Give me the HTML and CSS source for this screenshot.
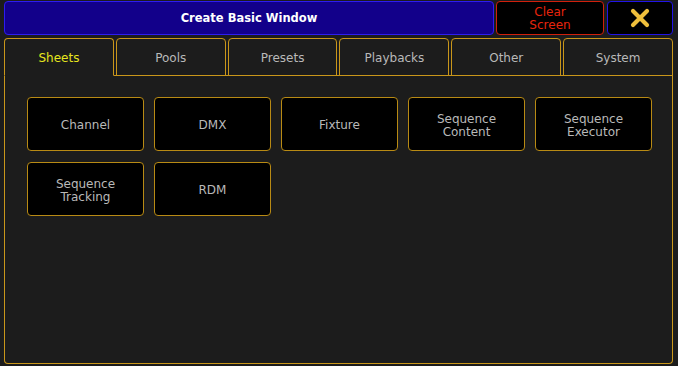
FILE: index.html
```html
<!DOCTYPE html>
<html lang="en">
<head>
    <meta charset="UTF-8">
    <title>Create Basic Window</title>
    <link rel="stylesheet" href="styles.css">
</head>
<body>
    <div class="window">
        <div class="header">
            <div class="title">Create Basic Window</div>
            <button class="clear-btn">Clear<br>Screen</button>
            <button class="close-btn">
                <svg width="22" height="20" viewBox="0 0 22 20">
                    <path d="M4 3 L18 17 M18 3 L4 17" stroke="#f0c03c" stroke-width="4.2" stroke-linecap="round" fill="none"/>
                </svg>
            </button>
        </div>

        <div class="tabs">
            <div class="tab active">Sheets</div>
            <div class="tab">Pools</div>
            <div class="tab">Presets</div>
            <div class="tab">Playbacks</div>
            <div class="tab">Other</div>
            <div class="tab">System</div>
        </div>

        <div class="panel">
            <div class="sheet-grid">
                <button class="sheet-btn">Channel</button>
                <button class="sheet-btn">DMX</button>
                <button class="sheet-btn">Fixture</button>
                <button class="sheet-btn">Sequence<br>Content</button>
                <button class="sheet-btn">Sequence<br>Executor</button>
                <button class="sheet-btn">Sequence<br>Tracking</button>
                <button class="sheet-btn">RDM</button>
            </div>
        </div>
    </div>
</body>
</html>
```

FILE: styles.css
```css
:root {
    --gold: #c9961a;
    --gold-dark: #b88a14;
    --bg: #1c1c1c;
    --label: #b9b9b9;
}

* {
    margin: 0;
    padding: 0;
    box-sizing: border-box;
}

body {
    background: var(--bg);
    font-family: "DejaVu Sans", sans-serif;
    font-size: 12px;
    color: var(--label);
}

.window {
    padding: 1px 5px 0 4px;
}

.header {
    display: flex;
    height: 34px;
}

.title {
    flex: 1;
    background: #12008a;
    border: 1px solid #2d1cf0;
    border-radius: 4px;
    color: #ffffff;
    font-weight: bold;
    font-size: 11.5px;
    display: flex;
    align-items: center;
    justify-content: center;
}

.clear-btn,
.close-btn,
.sheet-btn {
    font-family: inherit;
    background: #000;
    cursor: pointer;
}

.clear-btn {
    width: 108px;
    margin-left: 2px;
    padding-top: 2px;
    border: 1px solid #d0200c;
    border-radius: 4px;
    color: #e8240c;
    font-size: 12px;
    line-height: 13px;
}

.close-btn {
    width: 66px;
    margin-left: 3px;
    border: 1px solid #2214e6;
    border-radius: 4px;
    display: flex;
    align-items: center;
    justify-content: center;
}

.tabs {
    display: flex;
    gap: 2px;
    margin-top: 3px;
    border-bottom: 1px solid var(--gold);
}

.tab {
    flex: 1;
    height: 38px;
    padding-top: 1px;
    border: 1px solid var(--gold);
    border-radius: 4px 4px 0 0;
    margin-bottom: -1px;
    display: flex;
    align-items: center;
    justify-content: center;
    color: var(--label);
}

.tab.active {
    color: #e6e61e;
    border-bottom-color: var(--bg);
    background: var(--bg);
    position: relative;
}

.panel {
    height: 288px;
    border: 1px solid var(--gold);
    border-top: none;
    border-radius: 0 0 4px 4px;
    padding: 21px 22px;
}

.sheet-grid {
    display: grid;
    grid-template-columns: repeat(5, 117px);
    grid-auto-rows: 54px;
    column-gap: 10px;
    row-gap: 11px;
}

.sheet-btn {
    padding-top: 3px;
    border: 1px solid var(--gold-dark);
    border-radius: 4px;
    color: var(--label);
    font-size: 12px;
    line-height: 13px;
}
```
